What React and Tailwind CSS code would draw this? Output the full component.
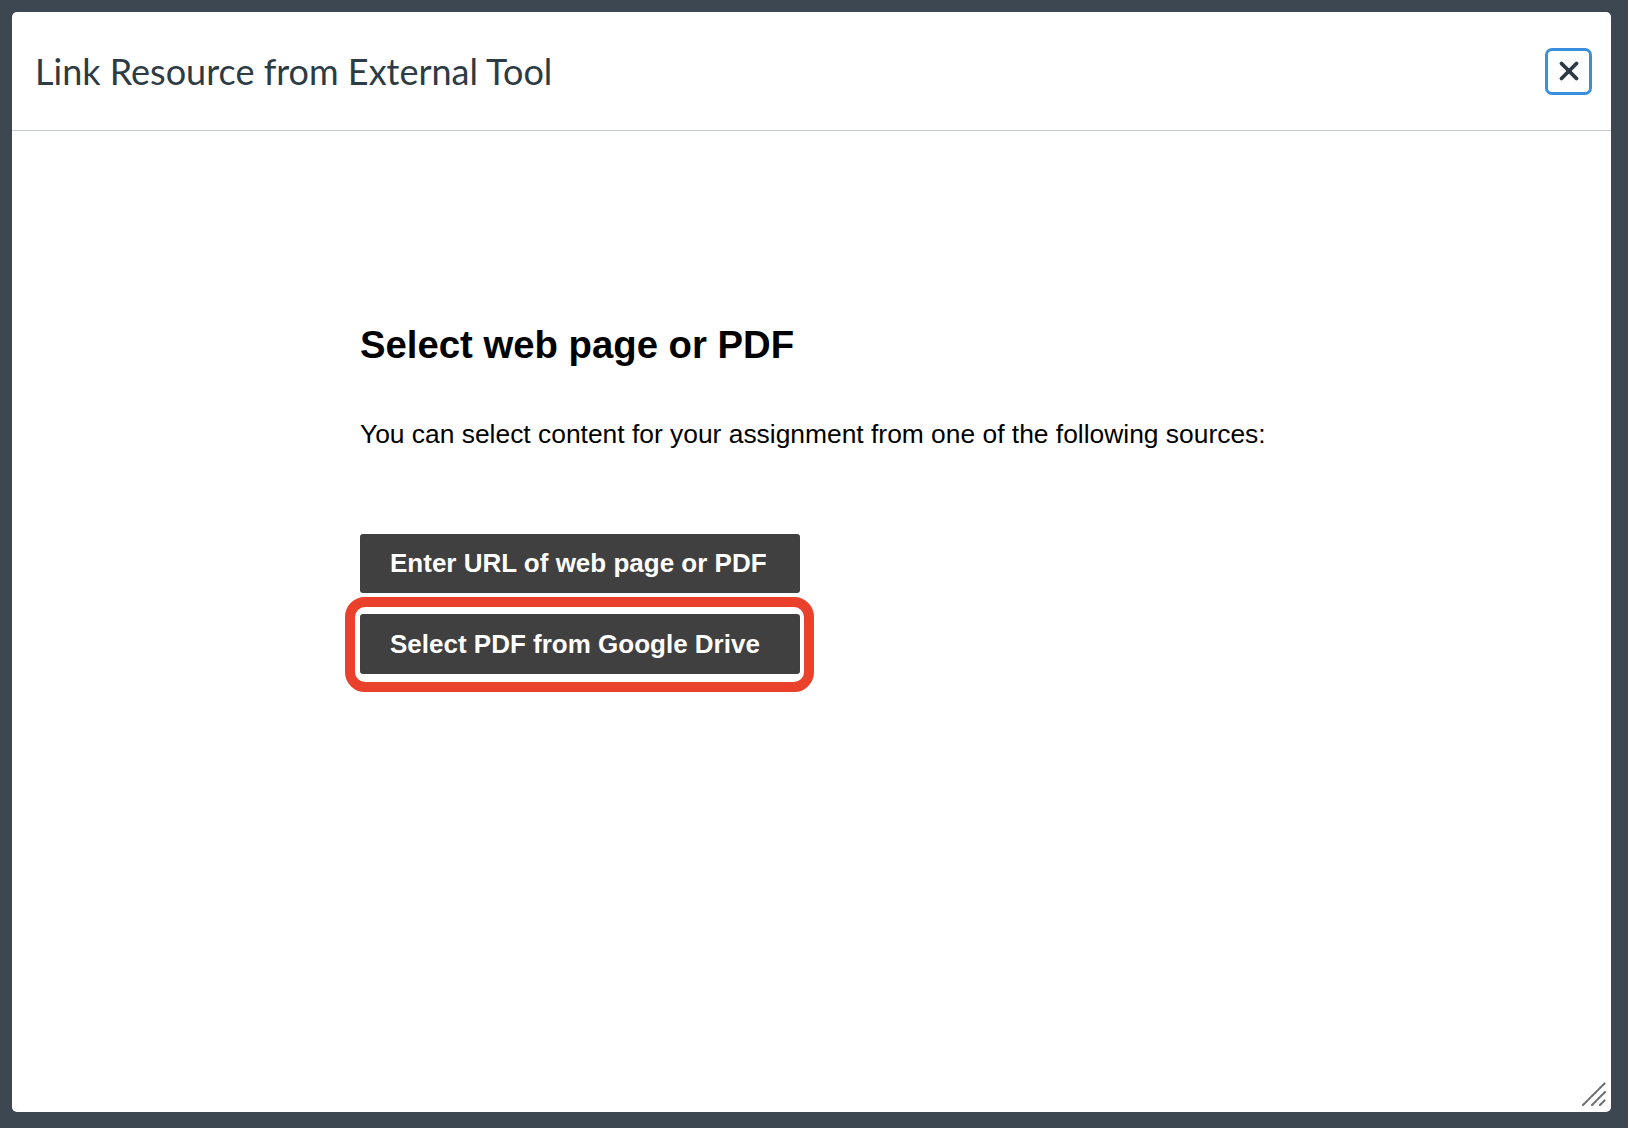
import { X } from 'lucide-react';

export default function App() {
  return (
    <div className="w-[1628px] h-[1128px] bg-[#3d4751] pt-3 pl-3 pr-[17px] pb-4">
      <div className="relative h-full flex flex-col bg-white rounded-[5px]">
        <div className="h-[119px] flex items-center justify-between pl-[23px] pr-[19px] border-b border-[#c7cdd1]">
          <h1 className="text-[36px] text-[#2d3b45] font-['Lato',sans-serif] font-normal">Link Resource from External Tool</h1>
          <button className="w-[47px] h-[47px] flex items-center justify-center rounded-[7px] border-[3px] border-[#3a8fdd] text-[#2d3b45]">
            <X size={30} strokeWidth={3.1} />
          </button>
        </div>

        <div className="flex-1 pl-[348px] pt-[192px] font-['Liberation_Sans',Arial,sans-serif] text-black">
          <h2 className="text-[38.3px] leading-[44px] font-bold">Select web page or PDF</h2>
          <p className="mt-[52px] text-[26.4px] leading-[30px]">You can select content for your assignment from one of the following sources:</p>

          <div className="mt-[85px] flex flex-col gap-[21px]">
            <button className="w-[440px] h-[59px] bg-[#404040] rounded-[3px] text-left pl-[30px] text-white text-[26px] font-bold">
              Enter URL of web page or PDF
            </button>
            <div className="relative w-[440px]">
              <button className="w-[440px] h-[60px] bg-[#404040] rounded-[3px] text-left pl-[30px] text-white text-[26px] font-bold">
                Select PDF from Google Drive
              </button>
              <span className="absolute -top-[17px] -left-[15px] -right-[14px] -bottom-[18px] border-[10px] border-[#e9412b] rounded-[20px] pointer-events-none" />
            </div>
          </div>
        </div>

        <svg className="absolute right-[5px] bottom-[6px]" width="24" height="24" viewBox="0 0 24 24">
          <g stroke="#6b6b6b" strokeWidth="2" strokeLinecap="round" strokeDasharray="2.5 1.5">
            <line x1="1" y1="23" x2="23" y2="1" />
            <line x1="10" y1="23" x2="23" y2="10" />
            <line x1="18" y1="23" x2="23" y2="18" />
          </g>
        </svg>
      </div>
    </div>
  );
}
